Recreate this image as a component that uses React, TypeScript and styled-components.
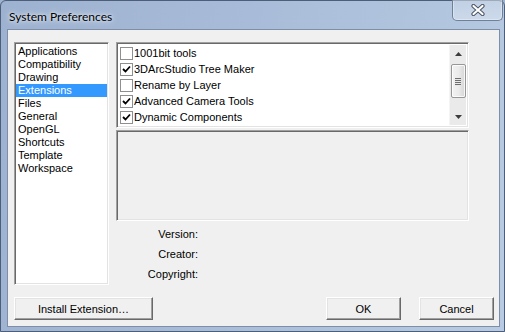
import React from "react";
import styled, { createGlobalStyle } from "styled-components";

const Global = createGlobalStyle`
  html, body { margin: 0; padding: 0; background: #9fb3d1; }
  body { width: 505px; height: 332px; overflow: hidden; }
  * { box-sizing: border-box; }
`;

const Window = styled.div`
  width: 505px;
  height: 332px;
  display: flex;
  flex-direction: column;
  border: 1px solid #4d5e78;
  border-radius: 6px 6px 0 0;
  padding: 0 4px 4px 6px;
  background: linear-gradient(100deg, #9db2d0 0%, #a8bcd9 45%, #b8cbe2 100%);
`;

const TitleBar = styled.div`
  height: 28px;
  display: flex;
  align-items: flex-start;
`;

const Title = styled.span`
  font-family: "Lato", "Liberation Sans", sans-serif;
  font-size: 12px;
  color: #000;
  margin: 8px 0 0 2px;
  text-shadow: 0 0 6px rgba(255, 255, 255, 0.9), 0 0 3px rgba(255, 255, 255, 0.7);
`;

const CloseButton = styled.div`
  margin: -1px -3px 0 auto;
  width: 51px;
  height: 21px;
  border: 1px solid #6f8099;
  border-top: none;
  border-radius: 0 0 5px 5px;
  background: linear-gradient(180deg, rgba(255,255,255,0.18), rgba(255,255,255,0.32));
  box-shadow: inset 0 0 0 1px rgba(255, 255, 255, 0.35);
  display: flex;
  align-items: center;
  justify-content: center;
`;

const Client = styled.div`
  flex: 1;
  display: flex;
  flex-direction: column;
  border: 1px solid #7d8ea6;
  background: #f0f0f0;
  padding: 12px 5px 6px 6px;
  font-family: "Liberation Sans", Arial, sans-serif;
  font-size: 11px;
  color: #000;
`;

const Main = styled.div`
  height: 243px;
  display: flex;
  gap: 7px;
`;

const sunken = `
  border: 1px solid;
  border-color: #a0a0a0 #ffffff #ffffff #a0a0a0;
  box-shadow: inset 1px 1px 0 #696969, inset -1px -1px 0 #e3e3e3;
`;

const CategoryList = styled.div`
  width: 95px;
  height: 100%;
  ${sunken}
  background: #fff;
  padding: 2px 1px;
  display: flex;
  flex-direction: column;
`;

const Category = styled.div<{ $selected?: boolean }>`
  height: 13px;
  line-height: 13px;
  padding-left: 2px;
  white-space: nowrap;
  background: ${(p) => (p.$selected ? "#3399ff" : "transparent")};
  color: ${(p) => (p.$selected ? "#fff" : "#000")};
`;

const RightColumn = styled.div`
  width: 353px;
  display: flex;
  flex-direction: column;
`;

const CheckList = styled.div`
  height: 86px;
  ${sunken}
  background: #fff;
  padding: 2px;
  display: flex;
  overflow: hidden;
`;

const CheckItems = styled.div`
  flex: 1;
  display: flex;
  flex-direction: column;
  overflow: hidden;
`;

const CheckRow = styled.div`
  height: 16px;
  flex: none;
  display: flex;
  align-items: center;
  padding-left: 1px;
  gap: 1px;
  white-space: nowrap;
`;

const Box = styled.span`
  width: 13px;
  height: 13px;
  flex: none;
  border: 1px solid #8e8f8f;
  background: #fff;
  display: flex;
  align-items: center;
  justify-content: center;
`;

const Scrollbar = styled.div`
  width: 17px;
  flex: none;
  background: #eaeaea;
  border-left: 1px solid #f4f4f4;
  display: flex;
  flex-direction: column;
  align-items: center;
`;

const Arrow = styled.div`
  height: 17px;
  width: 100%;
  display: flex;
  align-items: center;
  justify-content: center;
  flex: none;
`;

const Thumb = styled.div`
  width: 15px;
  height: 34px;
  margin-top: 2px;
  border: 1px solid #979797;
  border-radius: 2px;
  background: linear-gradient(90deg, #f2f2f2 0%, #ebebeb 50%, #d6d6d6 100%);
  box-shadow: inset 0 0 0 1px rgba(255, 255, 255, 0.8);
  display: flex;
  flex-direction: column;
  align-items: center;
  justify-content: center;
  gap: 1px;
`;

const Grip = styled.span`
  width: 6px;
  height: 1px;
  background: #6e6e6e;
  box-shadow: 0 1px 0 #e8e8e8;
`;

const Description = styled.div`
  height: 91px;
  margin-top: 2px;
  ${sunken}
  background: #f0f0f0;
`;

const InfoGrid = styled.div`
  margin-top: 6px;
  display: grid;
  grid-template-columns: 82px 1fr;
  row-gap: 6px;
`;

const Label = styled.div`
  line-height: 14px;
  text-align: right;
  white-space: nowrap;
`;

const Value = styled.div`
  line-height: 14px;
`;

const ButtonRow = styled.div`
  margin-top: 12px;
  height: 23px;
  display: flex;
`;

const Button = styled.div<{ $width: number; $gapLeft?: number }>`
  width: ${(p) => p.$width}px;
  margin-left: ${(p) => p.$gapLeft ?? 0}px;
  height: 23px;
  display: flex;
  align-items: center;
  justify-content: center;
  border: 1px solid;
  border-color: #ffffff #696969 #696969 #ffffff;
  box-shadow: inset -1px -1px 0 #a0a0a0, inset 1px 1px 0 #e3e3e3;
  background: #f0f0f0;
  white-space: nowrap;
`;

const Spacer = styled.div`
  flex: 1;
`;

const categories = [
  "Applications",
  "Compatibility",
  "Drawing",
  "Extensions",
  "Files",
  "General",
  "OpenGL",
  "Shortcuts",
  "Template",
  "Workspace",
];

const extensions: [string, boolean][] = [
  ["1001bit tools", false],
  ["3DArcStudio Tree Maker", true],
  ["Rename by Layer", false],
  ["Advanced Camera Tools", true],
  ["Dynamic Components", true],
  ["Sandbox Tools", false],
];

const Check = () => (
  <svg width="9" height="9" viewBox="0 0 9 9">
    <path d="M1 4 L3.5 6.5 L8 1.5" fill="none" stroke="#000" strokeWidth="1.8" />
  </svg>
);

const CloseGlyph = () => (
  <svg width="14" height="12" viewBox="0 0 14 12">
    <path d="M2.5 2 L11.5 10 M11.5 2 L2.5 10" stroke="#4a5466" strokeWidth="4.2" strokeLinecap="round" />
    <path d="M2.5 2 L11.5 10 M11.5 2 L2.5 10" stroke="#ffffff" strokeWidth="2.2" strokeLinecap="round" />
  </svg>
);

export default function App() {
  return (
    <>
      <Global />
      <Window>
        <TitleBar>
          <Title>System Preferences</Title>
          <CloseButton>
            <CloseGlyph />
          </CloseButton>
        </TitleBar>
        <Client>
          <Main>
            <CategoryList>
              {categories.map((c) => (
                <Category key={c} $selected={c === "Extensions"}>
                  {c}
                </Category>
              ))}
            </CategoryList>
            <RightColumn>
              <CheckList>
                <CheckItems>
                  {extensions.map(([name, on]) => (
                    <CheckRow key={name}>
                      <Box>{on && <Check />}</Box>
                      <span>{name}</span>
                    </CheckRow>
                  ))}
                </CheckItems>
                <Scrollbar>
                  <Arrow>
                    <svg width="7" height="4" viewBox="0 0 7 4">
                      <path d="M0 4 L3.5 0 L7 4 Z" fill="#3c3c3c" />
                    </svg>
                  </Arrow>
                  <Thumb>
                    <Grip />
                    <Grip />
                    <Grip />
                    <Grip />
                  </Thumb>
                  <Spacer />
                  <Arrow>
                    <svg width="7" height="4" viewBox="0 0 7 4">
                      <path d="M0 0 L7 0 L3.5 4 Z" fill="#3c3c3c" />
                    </svg>
                  </Arrow>
                </Scrollbar>
              </CheckList>
              <Description />
              <InfoGrid>
                <Label>Version:</Label>
                <Value />
                <Label>Creator:</Label>
                <Value />
                <Label>Copyright:</Label>
                <Value />
              </InfoGrid>
            </RightColumn>
          </Main>
          <ButtonRow>
            <Button $width={139}>Install Extension…</Button>
            <Spacer />
            <Button $width={75}>OK</Button>
            <Button $width={75} $gapLeft={18}>Cancel</Button>
          </ButtonRow>
        </Client>
      </Window>
    </>
  );
}
